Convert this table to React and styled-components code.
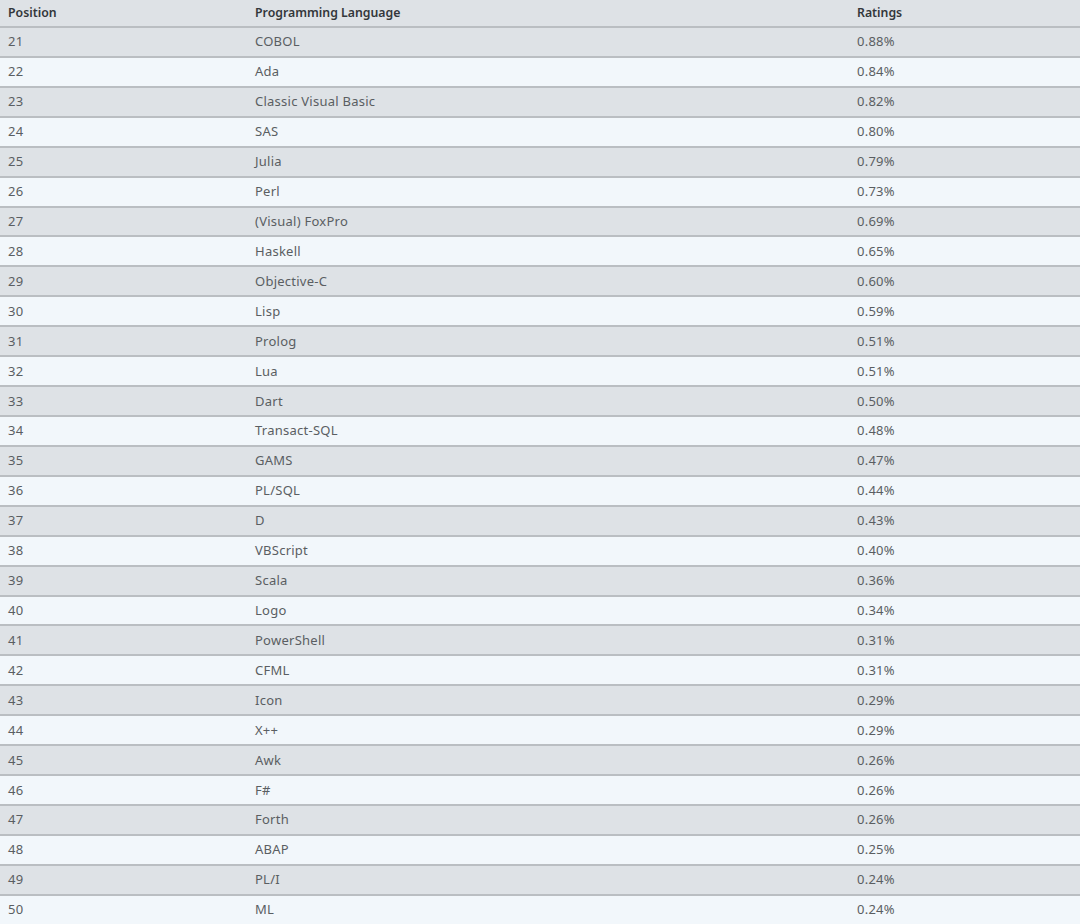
import React from "react";
import styled, { createGlobalStyle } from "styled-components";

const GlobalStyle = createGlobalStyle`
  html, body { margin: 0; padding: 0; background: #f1f6fa; }
  body { font-family: "Noto Sans", "Open Sans", sans-serif; }
`;

const data = [
  [21, "COBOL", "0.88%"], [22, "Ada", "0.84%"], [23, "Classic Visual Basic", "0.82%"],
  [24, "SAS", "0.80%"], [25, "Julia", "0.79%"], [26, "Perl", "0.73%"],
  [27, "(Visual) FoxPro", "0.69%"], [28, "Haskell", "0.65%"], [29, "Objective-C", "0.60%"],
  [30, "Lisp", "0.59%"], [31, "Prolog", "0.51%"], [32, "Lua", "0.51%"],
  [33, "Dart", "0.50%"], [34, "Transact-SQL", "0.48%"], [35, "GAMS", "0.47%"],
  [36, "PL/SQL", "0.44%"], [37, "D", "0.43%"], [38, "VBScript", "0.40%"],
  [39, "Scala", "0.36%"], [40, "Logo", "0.34%"], [41, "PowerShell", "0.31%"],
  [42, "CFML", "0.31%"], [43, "Icon", "0.29%"], [44, "X++", "0.29%"],
  [45, "Awk", "0.26%"], [46, "F#", "0.26%"], [47, "Forth", "0.26%"],
  [48, "ABAP", "0.25%"], [49, "PL/I", "0.24%"], [50, "ML", "0.24%"],
];

const Table = styled.div`
  width: 1080px;
  display: flex;
  flex-direction: column;
`;

const Row = styled.div`
  display: grid;
  grid-template-columns: 247px 602px 1fr;
  align-items: center;
  box-sizing: border-box;
  height: ${(p) => (p.$header ? "28px" : "29.93px")};
  padding: ${(p) => (p.$header ? "0 0 2px 8px" : "0 0 1px 8px")};
  background: ${(p) => (p.$striped ? "#dee2e6" : "#f2f7fb")};
  border-bottom: 2px solid #babec2;
`;

const HeadCell = styled.div`
  font-size: 12.3px;
  font-weight: 600;
  color: #33373b;
  letter-spacing: 0;
`;

const Cell = styled.div`
  font-size: 13px;
  font-weight: 400;
  color: #5a5e62;
  letter-spacing: 0.25px;
`;

export default function App() {
  return (
    <>
      <GlobalStyle />
      <Table>
        <Row $header $striped>
          <HeadCell>Position</HeadCell>
          <HeadCell>Programming Language</HeadCell>
          <HeadCell>Ratings</HeadCell>
        </Row>
        {data.map(([pos, lang, rating], i) => (
          <Row key={pos} $striped={i % 2 === 0}>
            <Cell>{pos}</Cell>
            <Cell>{lang}</Cell>
            <Cell>{rating}</Cell>
          </Row>
        ))}
      </Table>
    </>
  );
}
